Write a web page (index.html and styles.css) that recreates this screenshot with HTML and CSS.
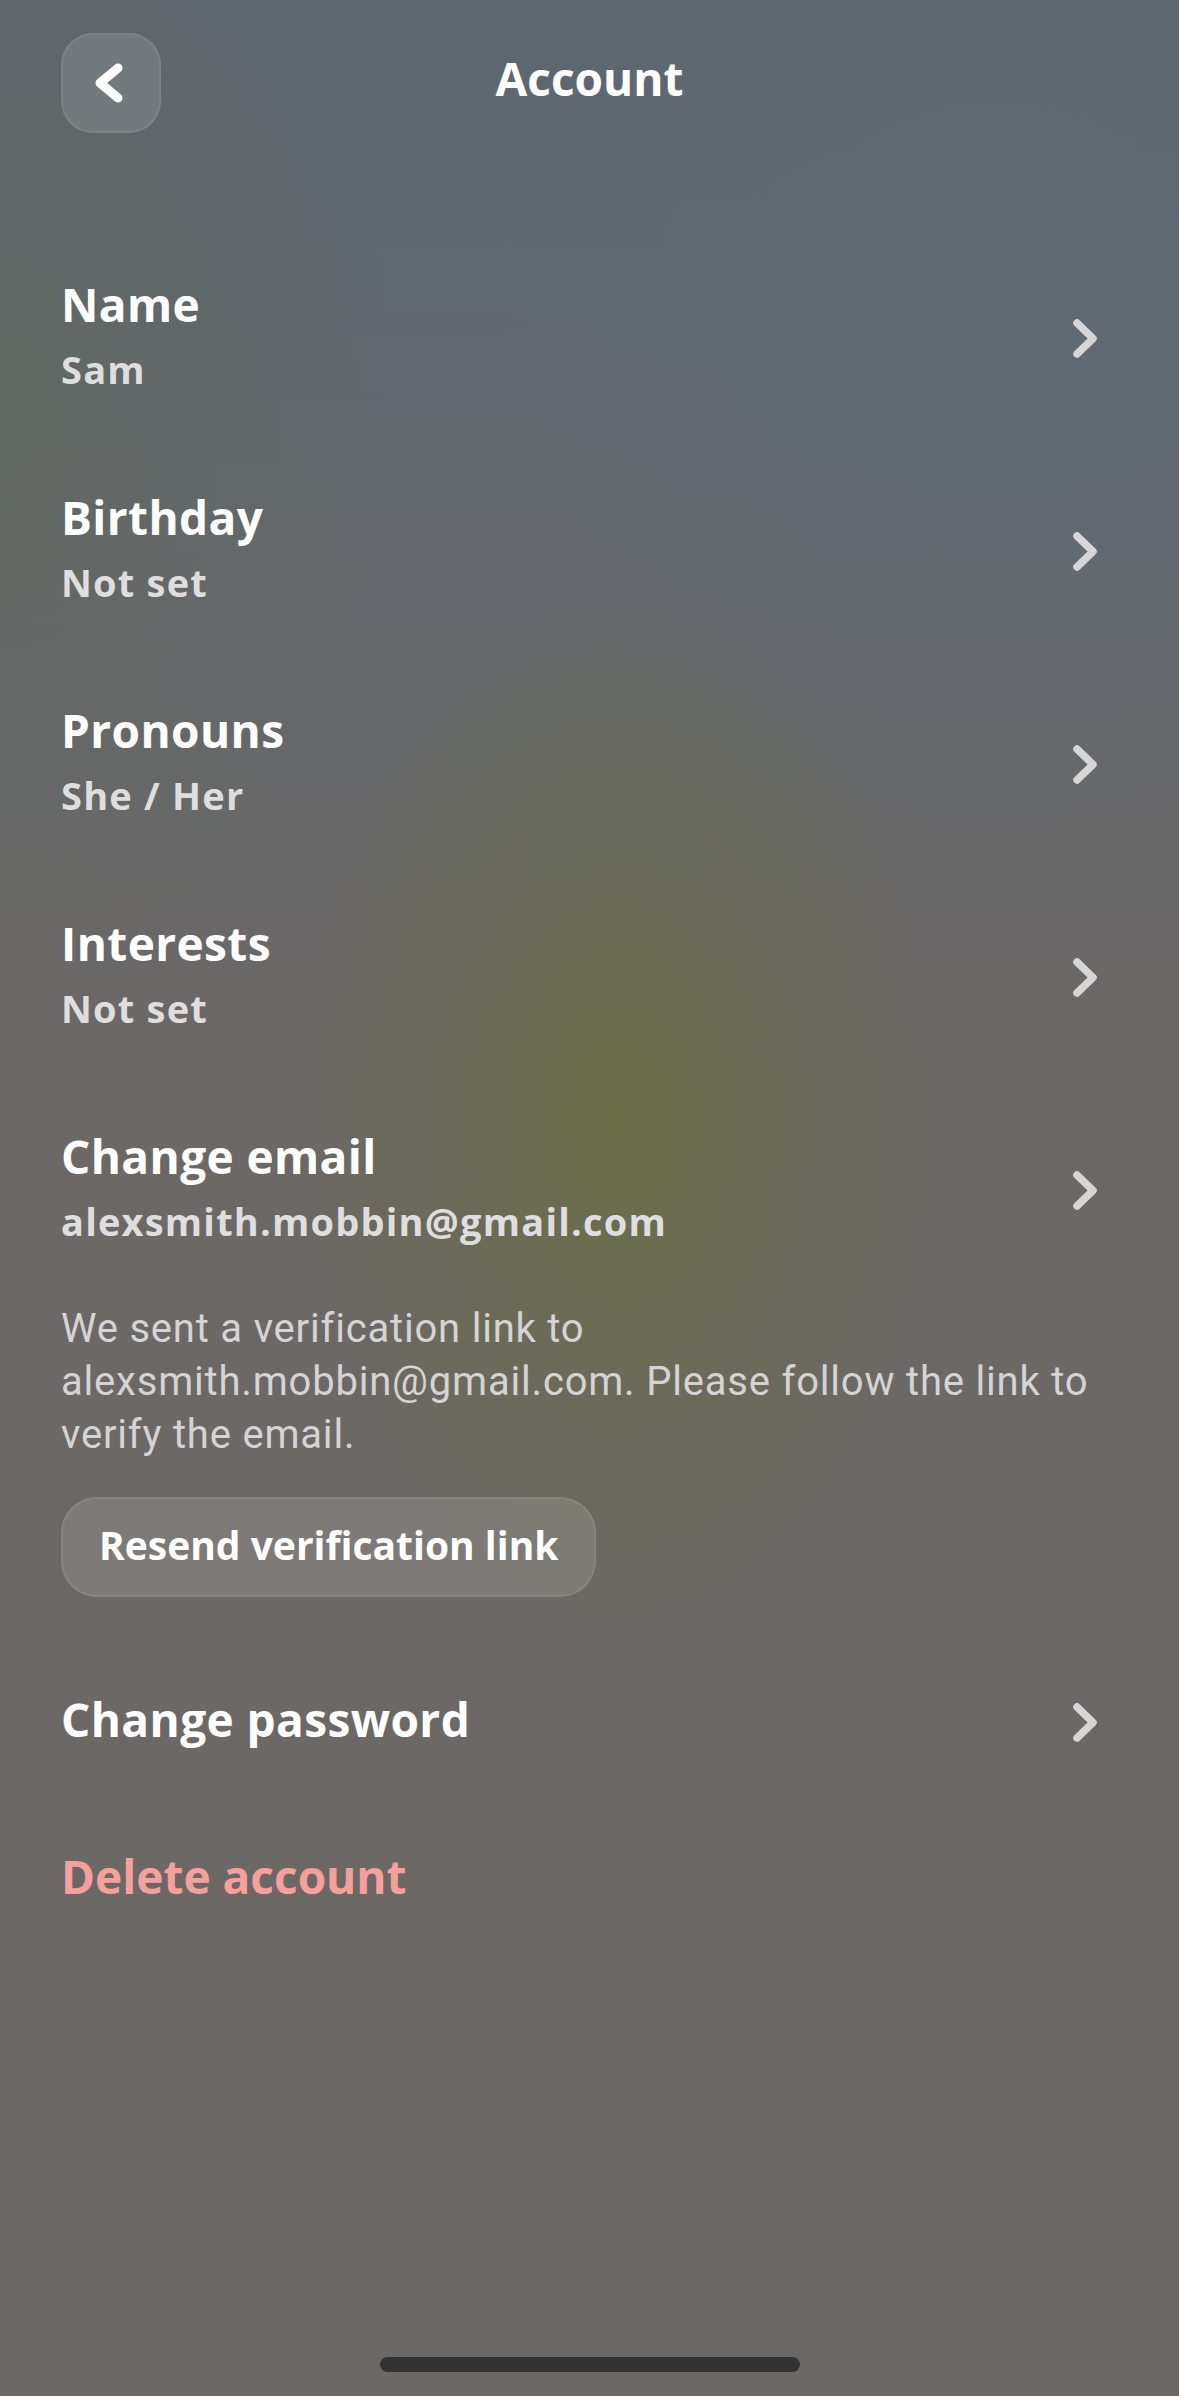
FILE: index.html
```html
<!DOCTYPE html>
<html lang="en">
<head>
    <meta charset="UTF-8">
    <meta name="viewport" content="width=device-width, initial-scale=1.0">
    <title>Account</title>
    <link rel="stylesheet" href="styles.css">
</head>
<body>
    <div class="screen">
        <div class="header">
            <button class="back-btn" aria-label="Back">
                <svg width="40" height="50" viewBox="0 0 40 50">
                    <polyline points="27,10 9,25 27,40" fill="none" stroke="#fff" stroke-width="9" stroke-linecap="round" stroke-linejoin="round"/>
                </svg>
            </button>
            <h1 class="title">Account</h1>
            <div class="header-spacer"></div>
        </div>

        <div class="list">
            <div class="row">
                <div class="row-text">
                    <div class="row-title">Name</div>
                    <div class="row-value">Sam</div>
                </div>
                <svg class="chevron" width="30" height="44" viewBox="0 0 30 44">
                    <polyline points="8,6 24,21.5 8,37" fill="none" stroke="#d6d6d6" stroke-width="7.5" stroke-linecap="round" stroke-linejoin="round"/>
                </svg>
            </div>
            <div class="row">
                <div class="row-text">
                    <div class="row-title">Birthday</div>
                    <div class="row-value">Not set</div>
                </div>
                <svg class="chevron" width="30" height="44" viewBox="0 0 30 44">
                    <polyline points="8,6 24,21.5 8,37" fill="none" stroke="#d6d6d6" stroke-width="7.5" stroke-linecap="round" stroke-linejoin="round"/>
                </svg>
            </div>
            <div class="row">
                <div class="row-text">
                    <div class="row-title">Pronouns</div>
                    <div class="row-value">She / Her</div>
                </div>
                <svg class="chevron" width="30" height="44" viewBox="0 0 30 44">
                    <polyline points="8,6 24,21.5 8,37" fill="none" stroke="#d6d6d6" stroke-width="7.5" stroke-linecap="round" stroke-linejoin="round"/>
                </svg>
            </div>
            <div class="row">
                <div class="row-text">
                    <div class="row-title">Interests</div>
                    <div class="row-value">Not set</div>
                </div>
                <svg class="chevron" width="30" height="44" viewBox="0 0 30 44">
                    <polyline points="8,6 24,21.5 8,37" fill="none" stroke="#d6d6d6" stroke-width="7.5" stroke-linecap="round" stroke-linejoin="round"/>
                </svg>
            </div>
            <div class="row row-email">
                <div class="row-text">
                    <div class="row-title">Change email</div>
                    <div class="row-value">alexsmith.mobbin@gmail.com</div>
                </div>
                <svg class="chevron" width="30" height="44" viewBox="0 0 30 44">
                    <polyline points="8,6 24,21.5 8,37" fill="none" stroke="#d6d6d6" stroke-width="7.5" stroke-linecap="round" stroke-linejoin="round"/>
                </svg>
            </div>

            <div class="verify">
                <p class="verify-text">We sent a verification link to alexsmith.mobbin@gmail.com. Please follow the link to verify the email.</p>
                <button class="resend-btn">Resend verification link</button>
            </div>

            <div class="row row-single">
                <div class="row-title">Change password</div>
                <svg class="chevron" width="30" height="44" viewBox="0 0 30 44">
                    <polyline points="8,6 24,21.5 8,37" fill="none" stroke="#d6d6d6" stroke-width="7.5" stroke-linecap="round" stroke-linejoin="round"/>
                </svg>
            </div>

            <div class="delete">Delete account</div>
        </div>

        <div class="home-indicator"></div>
    </div>
</body>
</html>
```

FILE: styles.css
```css
html, body {
    margin: 0;
    padding: 0;
}
body {
    font-family: "Open Sans", "Liberation Sans", sans-serif;
    color: #fff;
    background-color: #6c6866;
    background-image:
        radial-gradient(ellipse 320px 520px at 620px 1120px, rgba(106, 112, 62, 0.75), rgba(106, 112, 62, 0) 100%),
        radial-gradient(ellipse 500px 500px at 1000px 350px, rgba(96, 108, 118, 0.6), rgba(96, 108, 118, 0) 100%),
        radial-gradient(ellipse 400px 600px at 0px 400px, rgba(98, 104, 94, 0.7), rgba(98, 104, 94, 0) 100%),
        linear-gradient(180deg, #5e6770 0%, #606870 12%, rgba(100, 104, 108, 0) 45%);
    background-repeat: no-repeat;
}
.screen {
    min-height: 2396px;
    display: flex;
    flex-direction: column;
}
.header {
    display: flex;
    align-items: flex-start;
    justify-content: space-between;
    padding: 33px 61px 0;
}
.back-btn {
    width: 100px;
    height: 100px;
    border-radius: 32px;
    background: rgba(255, 255, 255, 0.12);
    border: 2px solid rgba(255, 255, 255, 0.07);
    display: flex;
    align-items: center;
    justify-content: center;
    padding: 0;
    cursor: pointer;
}
.header-spacer {
    width: 100px;
}
.title {
    margin: 17px 0 0;
    font-size: 46px;
    line-height: 56px;
    font-weight: 700;
}
.list {
    margin-top: 96px;
}
.row {
    display: flex;
    align-items: center;
    justify-content: space-between;
    padding: 47px 80px 48px 61px;
}
.chevron {
    margin-top: 8px;
}
.row-title {
    font-size: 46px;
    line-height: 56px;
    font-weight: 700;
    letter-spacing: 0.4px;
    color: #fff;
}
.row-value {
    margin-top: 12px;
    font-size: 38px;
    line-height: 50px;
    font-weight: 700;
    letter-spacing: 1.2px;
    color: #dedede;
}
.row-email {
    padding-bottom: 0;
}
.verify {
    padding: 56px 61px 0;
}
.verify-text {
    margin: 0;
    font-family: Roboto, "Liberation Sans", sans-serif;
    font-size: 40px;
    line-height: 53px;
    letter-spacing: 0.8px;
    color: #d4d4d4;
}
.resend-btn {
    margin-top: 36px;
    height: 100px;
    padding: 0 36px 5px;
    border-radius: 36px;
    background: rgba(255, 255, 255, 0.12);
    border: 2px solid rgba(255, 255, 255, 0.08);
    color: #fff;
    font-family: "Open Sans", "Liberation Sans", sans-serif;
    font-size: 39px;
    font-weight: 700;
    cursor: pointer;
}
.row-single {
    padding-top: 94px;
    padding-bottom: 0;
}
.delete {
    padding: 101px 61px 0;
    font-size: 46px;
    line-height: 56px;
    font-weight: 700;
    color: #f5a09d;
}
.home-indicator {
    margin: auto auto 24px;
    width: 420px;
    height: 15px;
    border-radius: 8px;
    background: #333333;
}
```
